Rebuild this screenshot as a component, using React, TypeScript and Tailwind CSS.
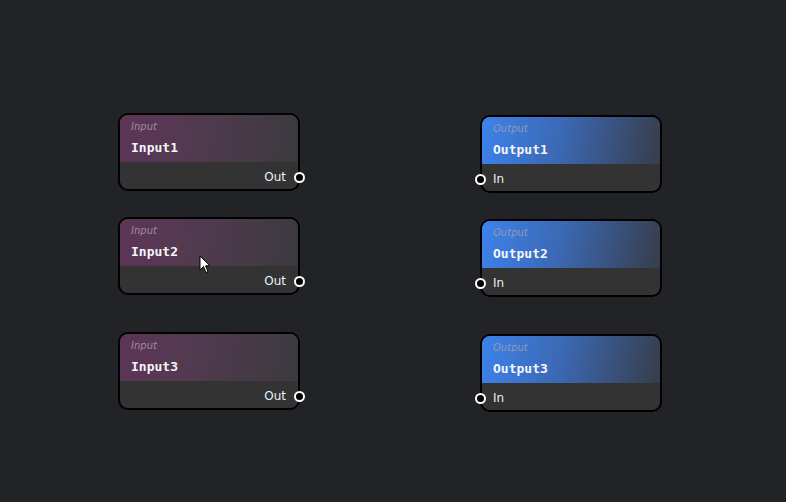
const nodes = [
  { kind: 'in', name: 'Input1', x: 118, y: 113 },
  { kind: 'in', name: 'Input2', x: 118, y: 217 },
  { kind: 'in', name: 'Input3', x: 118, y: 332 },
  { kind: 'out', name: 'Output1', x: 480, y: 115 },
  { kind: 'out', name: 'Output2', x: 480, y: 219 },
  { kind: 'out', name: 'Output3', x: 480, y: 334 },
]

function Port() {
  return <div className="w-[11px] h-[11px] rounded-full border-2 border-white bg-black" />
}

function Node({ kind, name }: { kind: string; name: string }) {
  const isIn = kind === 'in'
  return (
    <div className="relative w-[182px] h-[78px] rounded-[10px] border-2 border-black bg-[#333333] overflow-visible">
      <div
        className={
          isIn
            ? 'h-[47px] rounded-t-[8px] px-[11px] pt-[5px] bg-[linear-gradient(100deg,#5e3457_0%,#523a50_40%,#3b3a3e_100%)]'
            : 'h-[47px] rounded-t-[8px] px-[11px] pt-[5px] bg-[linear-gradient(100deg,#3d82ec_0%,#3b68b2_45%,#373d4a_100%)]'
        }
      >
        <div
          className={
            isIn
              ? 'text-[10px] leading-[13px] italic text-[#9a8aa3] font-["DejaVu_Sans",sans-serif]'
              : 'text-[10px] leading-[13px] italic text-[#8f9bb3] font-["DejaVu_Sans",sans-serif]'
          }
        >
          {isIn ? 'Input' : 'Output'}
        </div>
        <div className="mt-[7px] text-[13px] leading-[16px] font-bold text-[#f5f5fa] font-['DejaVu_Sans_Mono',monospace]">
          {name}
        </div>
      </div>
      <div
        className={
          isIn
            ? 'h-[27px] flex items-center justify-end pr-[12px] pt-[3px] text-[12px] text-[#e8f0f8] font-["DejaVu_Sans",sans-serif]'
            : 'h-[27px] flex items-center justify-start pl-[11px] pt-[3px] text-[12px] text-[#e8f0f8] font-["DejaVu_Sans",sans-serif]'
        }
      >
        {isIn ? 'Out' : 'In'}
      </div>
      <div className={isIn ? 'absolute right-[-7px] top-[57px]' : 'absolute left-[-7px] top-[57px]'}>
        <Port />
      </div>
    </div>
  )
}

export default function App() {
  return (
    <div className="relative w-[786px] h-[502px] bg-[#222326] overflow-hidden">
      {nodes.map((n) => (
        <div key={n.name} className="absolute" style={{ left: n.x, top: n.y }}>
          <Node kind={n.kind} name={n.name} />
        </div>
      ))}
      <svg className="absolute left-[199px] top-[255px]" width="12" height="19" viewBox="0 0 12 19">
        <path d="M1 1 L1 15 L4.5 11.5 L7 17.5 L9 16.6 L6.6 10.8 L11 10.8 Z" fill="#fff" stroke="#000" strokeWidth="1" />
      </svg>
    </div>
  )
}
